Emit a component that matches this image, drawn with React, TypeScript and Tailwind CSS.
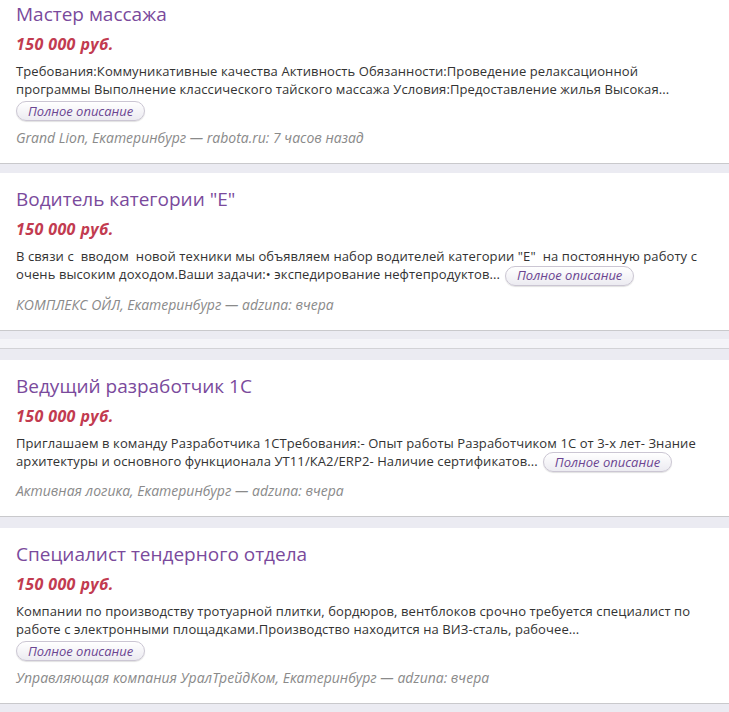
import React from 'react';

interface Vacancy {
  title: string;
  salary: string;
  lines: string[];
  buttonInline: boolean;
  meta: string;
}

const vacancies: Vacancy[] = [
  {
    title: 'Мастер массажа',
    salary: '150 000 руб.',
    lines: [
      'Требования:Коммуникативные качества Активность Обязанности:Проведение релаксационной',
      'программы Выполнение классического тайского массажа Условия:Предоставление жилья Высокая...',
    ],
    buttonInline: false,
    meta: 'Grand Lion, Екатеринбург — rabota.ru: 7 часов назад',
  },
  {
    title: 'Водитель категории "Е"',
    salary: '150 000 руб.',
    lines: [
      'В связи с\u00a0 вводом\u00a0 новой техники мы объявляем набор водителей категории "Е"\u00a0 на постоянную работу с',
      'очень высоким доходом.Ваши задачи:• экспедирование нефтепродуктов...',
    ],
    buttonInline: true,
    meta: 'КОМПЛЕКС ОЙЛ, Екатеринбург — adzuna: вчера',
  },
  {
    title: 'Ведущий разработчик 1С',
    salary: '150 000 руб.',
    lines: [
      'Приглашаем в команду Разработчика 1СТребования:- Опыт работы Разработчиком 1С от 3-х лет- Знание',
      'архитектуры и основного функционала УТ11/КА2/ERP2- Наличие сертификатов...',
    ],
    buttonInline: true,
    meta: 'Активная логика, Екатеринбург — adzuna: вчера',
  },
  {
    title: 'Специалист тендерного отдела',
    salary: '150 000 руб.',
    lines: [
      'Компании по производству тротуарной плитки, бордюров, вентблоков срочно требуется специалист по',
      'работе с электронными площадками.Производство находится на ВИЗ-сталь, рабочее...',
    ],
    buttonInline: false,
    meta: 'Управляющая компания УралТрейдКом, Екатеринбург — adzuna: вчера',
  },
];

function MoreButton({ inline }: { inline?: boolean }) {
  return (
    <span
      className={`${inline ? 'ml-[5px] align-middle' : ''} inline-flex h-[20px] items-center rounded-full border border-[#cbc6d3] bg-gradient-to-b from-white to-[#ecebf1] px-[11px] text-[13px] italic leading-none tracking-normal text-[#6b4591] shadow-[0_1px_1px_rgba(0,0,0,0.12)]`}
    >
      Полное описание
    </span>
  );
}

function VacancyCard({ v, cutTop }: { v: Vacancy; cutTop?: boolean }) {
  return (
    <div className={`bg-white border-b border-[#c9c9cc] px-4 pb-[16px] ${cutTop ? 'pt-[2px]' : 'pt-[14px]'}`}>
      <h2 className="text-[19px] leading-[24px] text-[#7a4a9c]">{v.title}</h2>
      <div className="mt-[8px] text-[16px] font-bold italic leading-[20px] tracking-[0.4px] text-[#c23b50]">
        {v.salary}
      </div>
      <div className="mt-[8px] text-[13px] leading-[18px] tracking-[0.1px] text-[#333333]">
        <div>{v.lines[0]}</div>
        <div className="leading-[19px]">
          {v.lines[1]}
          {v.buttonInline && <MoreButton inline />}
        </div>
        {!v.buttonInline && (
          <div className="mt-[2px]">
            <MoreButton />
          </div>
        )}
      </div>
      <div className={`${v.buttonInline ? 'mt-[10px]' : 'mt-[8px]'} text-[14px] italic leading-[18px] text-[#8a8a8a]`}>
        {v.meta}
      </div>
    </div>
  );
}

export default function App() {
  return (
    <div
      className="min-h-[712px] w-[729px] overflow-hidden bg-[#ebebf2]"
      style={{ fontFamily: '"Open Sans", "Noto Sans", sans-serif' }}
    >
      <VacancyCard v={vacancies[0]} cutTop />
      <div className="h-[9px]" />
      <VacancyCard v={vacancies[1]} />
      <div className="h-[8px]" />
      <div className="h-[10px] bg-[#f4f4f8] border-b border-[#d2d2d6]" />
      <div className="h-[11px]" />
      <VacancyCard v={vacancies[2]} />
      <div className="h-[11px]" />
      <VacancyCard v={vacancies[3]} />
    </div>
  );
}
